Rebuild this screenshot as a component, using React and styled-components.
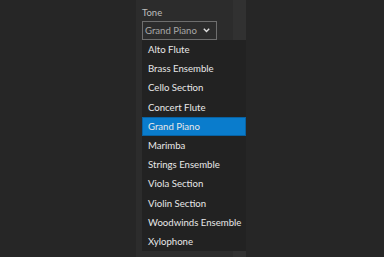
import React from "react";
import styled, { createGlobalStyle } from "styled-components";

const Global = createGlobalStyle`
  html, body { margin: 0; padding: 0; background: #262626; }
  body { font-family: Lato, "Noto Sans", sans-serif; }
`;

const Page = styled.div`
  width: 384px;
  height: 257px;
  display: flex;
  padding-left: 136px;
  box-sizing: border-box;
  overflow: hidden;
  position: relative;
`;

const Panel = styled.div`
  width: 97px;
  height: 100%;
  background: #2c2c2c;
  padding: 7px 0 0 6px;
  box-sizing: border-box;
  display: flex;
  flex-direction: column;
`;

const Strip = styled.div`
  width: 13px;
  height: 100%;
  background: #313131;
`;

const Label = styled.div`
  color: #bdbdbd;
  font-size: 9.5px;
  line-height: 12px;
  height: 14px;
`;

const Combo = styled.div`
  width: 75px;
  height: 19px;
  box-sizing: border-box;
  border: 1px solid #6e6e6e;
  display: flex;
  align-items: center;
  justify-content: space-between;
  padding: 0 6px 0 2px;
  color: #a8a8a8;
  font-size: 9.6px;
  white-space: nowrap;
`;

const Popup = styled.ul`
  position: absolute;
  left: 142px;
  top: 40px;
  width: 104px;
  margin: 0;
  padding: 0;
  list-style: none;
  background: #222222;
  display: flex;
  flex-direction: column;
`;

const Item = styled.li`
  height: 19.2px;
  display: flex;
  align-items: center;
  padding-left: 6px;
  box-sizing: border-box;
  font-size: 9.6px;
  color: #e8e8e8;
  background: ${(p) => (p.$selected ? "#0a7ccc" : "transparent")};
  box-shadow: ${(p) => (p.$selected ? "inset 0 0 0 1px #0862a3" : "none")};
  white-space: nowrap;
`;

const items = [
  "Alto Flute",
  "Brass Ensemble",
  "Cello Section",
  "Concert Flute",
  "Grand Piano",
  "Marimba",
  "Strings Ensemble",
  "Viola Section",
  "Violin Section",
  "Woodwinds Ensemble",
  "Xylophone",
];

export default function App() {
  return (
    <>
      <Global />
      <Page>
        <Panel>
          <Label>Tone</Label>
          <Combo>
            <span>Grand Piano</span>
            <svg width="7" height="5" viewBox="0 0 7 5">
              <path d="M0.8 0.8 L3.5 3.6 L6.2 0.8" fill="none" stroke="#e0e0e0" strokeWidth="1.4" />
            </svg>
          </Combo>
        </Panel>
        <Strip />
        <Popup>
          {items.map((t) => (
            <Item key={t} $selected={t === "Grand Piano"}>
              {t}
            </Item>
          ))}
        </Popup>
      </Page>
    </>
  );
}
